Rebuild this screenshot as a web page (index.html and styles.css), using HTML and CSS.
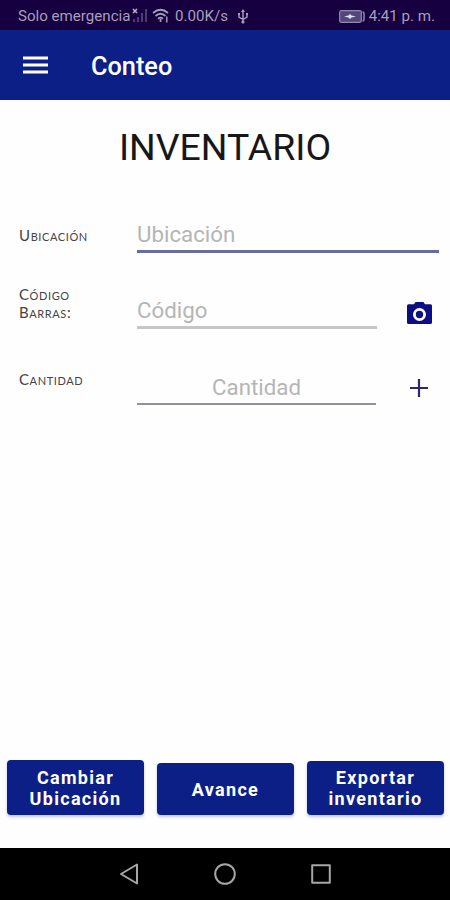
FILE: index.html
```html
<!DOCTYPE html>
<html lang="es">

<head>
    <meta charset="UTF-8">
    <meta name="viewport" content="width=device-width, initial-scale=1.0">
    <title>Conteo</title>
    <link rel="stylesheet" href="styles.css">
</head>

<body>
    <div class="status">
        <span class="carrier">Solo emergencia</span>
        <svg class="signal" width="16" height="16" viewBox="0 0 16 16">
            <path d="M1 1l4 4M5 1l-4 4" stroke="#b9b0cc" stroke-width="1.6" />
            <path d="M2 11v3M6 9v5M10 5v9M14 1v13" stroke="#4b3b72" stroke-width="2" />
        </svg>
        <svg class="wifi" width="17" height="16" viewBox="0 0 17 16" fill="none" stroke="#a79fbd" stroke-width="1.7">
            <path d="M1 5Q8.500-1.500 16 5M3.500 8Q8.500 3.500 13.500 8M6 10.800Q8.500 8.600 11 10.800" />
            <path d="M8.500 11v3" />
            <path d="M14.800 8.500v6" stroke-width="1.4" />
        </svg>
        <span class="speed">0.00K/s</span>
        <svg class="usb" width="12" height="15" viewBox="0 0 12 15" fill="none" stroke="#a79fbd" stroke-width="1.4">
            <path d="M6 2v11M2 5v3l4 2.500 4-2.500V5" />
            <path d="M6 0l2 3H4zM1 4h2v2H1zM9 4h2v2H9z" fill="#a79fbd" stroke="none" />
            <circle cx="6" cy="13" r="1.600" fill="#a79fbd" stroke="none" />
        </svg>
        <svg class="battery" width="26" height="13" viewBox="0 0 26 13">
            <rect x="0.700" y="0.700" width="21.600" height="11.600" rx="1.500" fill="#54467c" stroke="#9389ae" stroke-width="1.200" />
            <path d="M23.500 2q1.500 0 1.500 2v5q0 2-1.500 2" fill="none" stroke="#9389ae" stroke-width="1.500" />
            <path d="M5 6.500l4.500-1L11 4l1.500 1.500 4.500 1-4.500 1L11 9 9.500 7.500z" fill="#e2deeb" />
        </svg>
        <span class="clock">4:41 p. m.</span>
    </div>

    <div class="topbar">
        <svg class="menu" width="25" height="18" viewBox="0 0 25 18">
            <path d="M0 2h25M0 9h25M0 16h25" stroke="#fff" stroke-width="3" />
        </svg>
        <div class="title">Conteo</div>
    </div>

    <div class="content">
        <h1>INVENTARIO</h1>
        <form class="fields">
            <div class="row">
                <label for="ubicacion">Ubicación</label>
                <input id="ubicacion" class="active" type="text" placeholder="Ubicación">
            </div>
            <div class="row codes">
                <label for="codigo">Código<br>Barras:</label>
                <input id="codigo" type="text" placeholder="Código">
                <svg class="camera" width="25" height="22" viewBox="0 0 25 22">
                    <path fill-rule="evenodd" fill="#0b0f82" d="M8.500 0h8l1.500 2.300H23.500q1.500 0 1.500 1.500V20.500q0 1.500-1.500 1.500H1.500Q0 22 0 20.500V3.800q0-1.500 1.500-1.500H7zM12.500 6a6.500 6.500 0 1 0 0 13 6.500 6.500 0 0 0 0-13z" />
                    <circle cx="12.500" cy="12.500" r="3.700" fill="#0b0f82" />
                </svg>
            </div>
            <div class="row amount">
                <label for="cantidad">Cantidad</label>
                <input id="cantidad" type="text" placeholder="Cantidad">
                <svg class="plus" width="18" height="18" viewBox="0 0 18 18">
                    <path d="M0 9h18M9 0v18" stroke="#2b2773" stroke-width="2.200" />
                </svg>
            </div>
        </form>
        <div class="buttons">
            <button type="button" class="change">Cambiar<br>Ubicación</button>
            <button type="button" class="progress">Avance</button>
            <button type="button" class="export">Exportar<br>inventario</button>
        </div>
    </div>

    <div class="navbar">
        <svg width="20" height="22" viewBox="0 0 20 22">
            <path d="M18 1.500v19L2 11z" />
        </svg>
        <svg width="22" height="22" viewBox="0 0 22 22">
            <circle cx="11" cy="11" r="9.800" />
        </svg>
        <svg width="20" height="20" viewBox="0 0 20 20">
            <rect x="1.200" y="1.200" width="17.600" height="17.600" />
        </svg>
    </div>
</body>

</html>
```
FILE: styles.css
```css
* {
    box-sizing: border-box;
}

body {
    margin: 0;
    height: 900px;
    display: flex;
    flex-direction: column;
    background-color: #fefefe;
    font-family: Roboto, sans-serif;
    overflow: hidden;
}

svg {
    display: block;
    flex: none;
}

.status {
    display: flex;
    align-items: center;
    height: 30px;
    padding: 2px 15px 0 18px;
    background-color: #16003f;
    color: #a79fbd;
    font-size: 15.1px;
    white-space: nowrap;
}

.carrier {
    width: 114px;
}

.wifi {
    margin-left: 4px;
}

.speed {
    width: 54px;
    margin-left: 6px;
}

.usb {
    margin-left: 8px;
}

.battery {
    margin-left: auto;
    margin-right: 4px;
}

.topbar {
    display: flex;
    align-items: center;
    height: 70px;
    padding: 2px 23px 0;
    background-color: #0c1f87;
    color: white;
}

.menu {
    margin-top: -2px;
}

.title {
    margin-left: 43px;
    padding-top: 1px;
    font-size: 25.3px;
    font-weight: 500;
}

.content {
    flex: 1;
    display: flex;
    flex-direction: column;
}

h1 {
    margin: 25px 0 0;
    font-size: 37.4px;
    font-weight: 400;
    line-height: 44px;
    text-align: center;
    color: #171717;
}

.fields {
    padding: 45px 11px 0 19px;
}

.row {
    display: flex;
    align-items: flex-start;
    height: 76px;
}

label {
    width: 118px;
    padding-top: 12px;
    font-family: Lato, sans-serif;
    font-variant: small-caps;
    font-size: 15px;
    line-height: 18px;
    letter-spacing: 0.6px;
    color: #444;
}

input {
    width: 240px;
    height: 39px;
    padding: 3px 0 0;
    border: none;
    border-bottom: 3px solid #c6c6c6;
    border-radius: 0;
    background: none;
    font-family: Roboto, sans-serif;
    font-size: 22.3px;
    outline: none;
}

input::placeholder {
    color: #b5b5b5;
    opacity: 1;
}

.active {
    width: 302px;
    border-bottom-color: #686c9e;
}

.codes label {
    padding-top: 0;
    margin-top: -5px;
}

.camera {
    margin: 12px 0 0 30px;
}

.amount label {
    padding-top: 4px;
}

.amount input {
    width: 239px;
    padding-top: 4px;
    border-bottom: 2px solid #9090ac;
    text-align: center;
}

.plus {
    margin: 13px 0 0 34px;
}

.buttons {
    display: flex;
    justify-content: space-between;
    align-items: flex-end;
    margin-top: auto;
    padding: 0 6px 33px 7px;
}

button {
    width: 137px;
    height: 54px;
    padding: 0;
    border: none;
    border-radius: 4px;
    background-color: #0c1f87;
    box-shadow: 0 2px 3px rgba(12, 31, 135, 0.25);
    color: white;
    font-family: Roboto, sans-serif;
    font-size: 18px;
    font-weight: 700;
    line-height: 21px;
    letter-spacing: 1.3px;
}

.change {
    height: 55px;
}

.progress {
    height: 52px;
}

.navbar {
    display: flex;
    justify-content: center;
    align-items: center;
    gap: 75px;
    height: 52px;
    background-color: black;
}

.navbar svg {
    fill: none;
    stroke: #a6a6a6;
    stroke-width: 2;
    stroke-linejoin: round;
}
```
